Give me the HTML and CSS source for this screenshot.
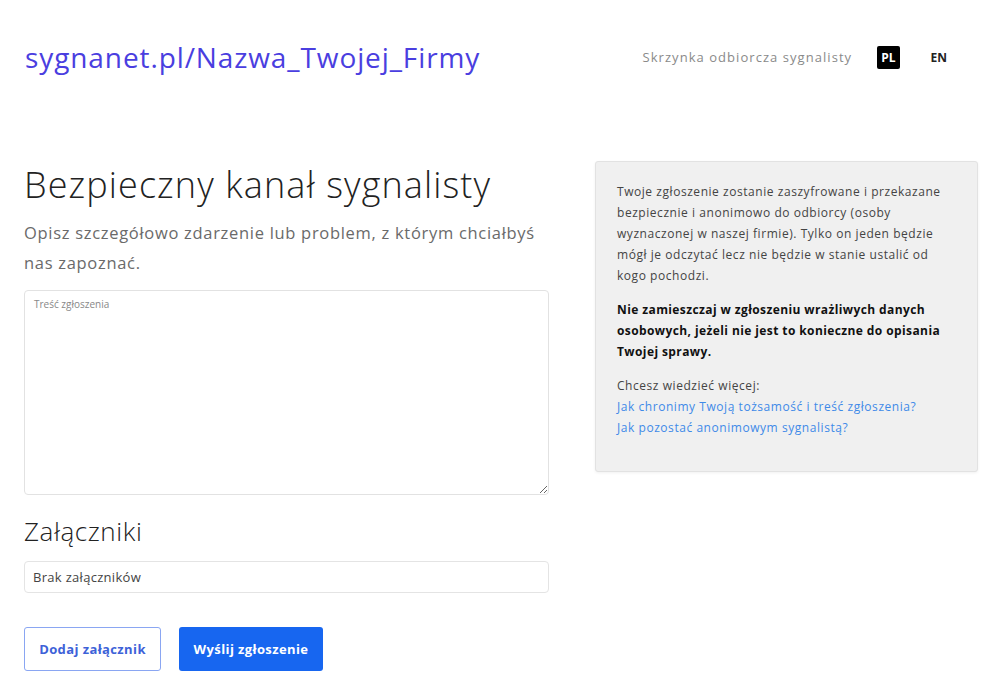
FILE: index.html
```html
<!DOCTYPE html>
<html lang="pl">
<head>
    <meta charset="UTF-8">
    <meta name="viewport" content="width=device-width, initial-scale=1.0">
    <title>Bezpieczny kanał sygnalisty</title>
    <link rel="stylesheet" href="styles.css">
</head>
<body>
    <header class="top-bar">
        <a class="logo" href="#">sygnanet.pl/Nazwa_Twojej_Firmy</a>
        <nav class="top-nav">
            <a class="inbox-link" href="#">Skrzynka odbiorcza sygnalisty</a>
            <span class="lang lang-active">PL</span>
            <a class="lang" href="#">EN</a>
        </nav>
    </header>

    <main class="content">
        <section class="report">
            <h1>Bezpieczny kanał sygnalisty</h1>
            <p class="lead">Opisz szczegółowo zdarzenie lub problem, z którym chciałbyś nas zapoznać.</p>
            <textarea class="report-text" placeholder="Treść zgłoszenia"></textarea>

            <h2>Załączniki</h2>
            <div class="attachments">Brak załączników</div>

            <div class="actions">
                <button class="btn btn-outline">Dodaj załącznik</button>
                <button class="btn btn-primary">Wyślij zgłoszenie</button>
            </div>
        </section>

        <aside class="info-box">
            <p>Twoje zgłoszenie zostanie zaszyfrowane i przekazane bezpiecznie i anonimowo do odbiorcy (osoby wyznaczonej w naszej firmie). Tylko on jeden będzie mógł je odczytać lecz nie będzie w stanie ustalić od kogo pochodzi.</p>
            <p class="warning">Nie zamieszczaj w zgłoszeniu wrażliwych danych osobowych, jeżeli nie jest to konieczne do opisania Twojej sprawy.</p>
            <p>
                Chcesz wiedzieć więcej:<br>
                <a href="#">Jak chronimy Twoją tożsamość i treść zgłoszenia?</a><br>
                <a href="#">Jak pozostać anonimowym sygnalistą?</a>
            </p>
        </aside>
    </main>
</body>
</html>
```

FILE: styles.css
```css
* {
    margin: 0;
    padding: 0;
    box-sizing: border-box;
    font-family: 'Open Sans', 'Noto Sans', sans-serif;
}

body {
    background: #ffffff;
    color: #333;
}

a {
    text-decoration: none;
}

.top-bar {
    display: flex;
    align-items: center;
    justify-content: space-between;
    padding: 38px 49px 0 25px;
    height: 76px;
}

.logo {
    color: #4a3ee0;
    font-size: 28px;
    font-weight: 400;
    letter-spacing: 0.9px;
}

.top-nav {
    display: flex;
    align-items: center;
}

.inbox-link {
    color: #8a8a8a;
    font-size: 13px;
    letter-spacing: 1.05px;
    margin-right: 25px;
}

.lang {
    display: inline-block;
    font-size: 12px;
    font-weight: 700;
    color: #222;
    padding: 3px 4px;
    border-radius: 2px;
}

.lang-active {
    background: #000;
    color: #fff;
    margin-right: 27px;
}

.content {
    display: flex;
    align-items: flex-start;
    gap: 46px;
    padding: 85px 22px 0 24px;
}

.report {
    width: 525px;
}

h1 {
    font-size: 36px;
    font-weight: 300;
    color: #222;
    line-height: 48px;
    letter-spacing: 1.1px;
}

.lead {
    margin-top: 9px;
    font-size: 16.5px;
    line-height: 30px;
    color: #6a6a6a;
    letter-spacing: 0.7px;
}

.report-text {
    display: block;
    width: 100%;
    height: 205px;
    margin-top: 12px;
    padding: 6px 9px;
    border: 1px solid #e2e2e2;
    border-radius: 4px;
    font-size: 10px;
    color: #444;
    outline: none;
}

.report-text::placeholder {
    color: #888;
}

h2 {
    margin-top: 16px;
    font-size: 26px;
    font-weight: 300;
    color: #222;
    line-height: 40px;
    letter-spacing: 0.6px;
}

.attachments {
    margin-top: 10px;
    height: 32px;
    line-height: 30px;
    padding: 0 8px;
    border: 1px solid #e4e4e4;
    border-radius: 4px;
    font-size: 13px;
    color: #444;
    letter-spacing: 0.3px;
}

.actions {
    display: flex;
    gap: 18px;
    margin-top: 34px;
}

.btn {
    height: 44px;
    border-radius: 3px;
    font-size: 13px;
    font-weight: 700;
    letter-spacing: 0.4px;
    cursor: pointer;
}

.btn-outline {
    width: 137px;
    background: #fff;
    border: 1px solid #8aa6f2;
    color: #3d62d8;
}

.btn-primary {
    width: 144px;
    background: #1766f0;
    border: none;
    color: #fff;
}

.info-box {
    width: 383px;
    min-height: 311px;
    background: #f0f0f0;
    border: 1px solid #e2e2e2;
    border-radius: 3px;
    box-shadow: 0 1px 3px rgba(0, 0, 0, 0.06);
    padding: 19px 20px 20px 21px;
    font-size: 12px;
    line-height: 21px;
    color: #444;
    letter-spacing: 0.55px;
}

.info-box p {
    margin-bottom: 13px;
}

.info-box .warning {
    font-weight: 700;
    color: #111;
    letter-spacing: 0.4px;
}

.info-box a {
    color: #3f8ae8;
}
```
